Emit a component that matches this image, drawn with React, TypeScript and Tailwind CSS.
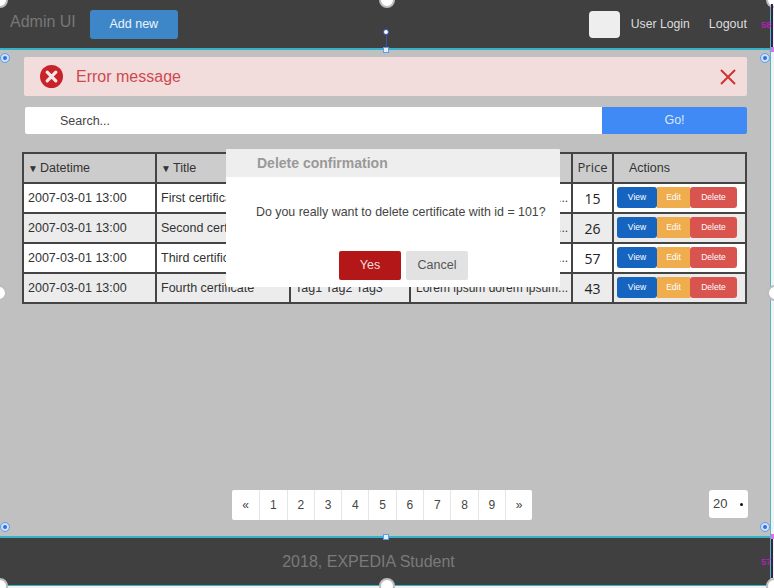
import React from "react";

const rows = [
  { title: "First certificate", price: "15" },
  { title: "Second certificate", price: "26" },
  { title: "Third certificate", price: "57" },
  { title: "Fourth certificate", price: "43" },
];
const pages = ["«", "1", "2", "3", "4", "5", "6", "7", "8", "9", "»"];

function Radio({ className }: { className: string }) {
  return (
    <span className={`absolute flex h-[10px] w-[10px] items-center justify-center rounded-full border border-[#5b9bf0] bg-[#cfe0f7] ${className}`}>
      <span className="h-[4px] w-[4px] rounded-full bg-[#2f73e0]" />
    </span>
  );
}

function Knob({ className }: { className: string }) {
  return <span className={`absolute h-[16px] w-[16px] rounded-full border-2 border-[#bdbdbd] bg-white ${className}`} />;
}

function Sort() {
  return <span className="mr-[4px] inline-block w-[8px] text-[10px] leading-none">▼</span>;
}

export default function App() {
  return (
    <div className="relative flex h-[588px] w-[774px] flex-col overflow-hidden bg-[#f2f2f2] font-['Liberation_Sans',Arial,sans-serif] text-[#333]">
      <div className="flex h-[586px] w-[771px] flex-col border-r border-[#4fb8c4]">
        <header className="flex h-[50px] shrink-0 items-center border-b-2 border-[#35b3c9] bg-[#404040] pl-[10px] pr-[23px]">
          <span className="-mt-[5px] text-[16px] text-[#777]">Admin UI</span>
          <button className="ml-[14px] h-[29px] w-[88px] rounded-[3px] bg-[#3d87c9] text-[12.5px] text-[#eef4fa]">Add new</button>
          <div className="ml-auto h-[27px] w-[31px] rounded-[4px] bg-[#eeeeee]" />
          <span className="ml-[11px] mt-[1px] text-[12.2px] text-[#dddddd]">User Login</span>
          <span className="ml-[19px] mt-[1px] text-[12.5px] text-[#dddddd]">Logout</span>
        </header>

        <main className="flex min-h-0 flex-1 flex-col bg-[#c0c0c0] pl-[22px] pr-[23px] pt-[7px]">
          <div className="ml-[2px] flex h-[39px] shrink-0 items-center rounded-[2px] bg-[#f3dcdc] pl-[16px] pr-[10px]">
            <svg width="23" height="23" viewBox="0 0 24 24">
              <circle cx="12" cy="12" r="12" fill="#c8232a" />
              <path d="M7.5 7.5 16.5 16.5M16.5 7.5 7.5 16.5" stroke="#f6e6e6" strokeWidth="3.4" strokeLinecap="round" />
            </svg>
            <span className="ml-[13px] text-[16px] text-[#cd4a4f]">Error message</span>
            <svg className="ml-auto" width="18" height="18" viewBox="0 0 18 18">
              <path d="M2 2 16 16M16 2 2 16" stroke="#cc3333" strokeWidth="2" />
            </svg>
          </div>

          <div className="ml-[3px] mt-[11px] flex h-[27px] shrink-0 overflow-hidden rounded-[2px]">
            <div className="flex flex-1 items-center bg-white pl-[35px] pt-[1px] text-[12.5px] text-[#444]">Search...</div>
            <button className="w-[145px] bg-[#3f8af5] text-[12.5px] text-[#dbe8fb]">Go!</button>
          </div>

          <table className="mt-[18px] w-[723px] shrink-0 table-fixed border-collapse border-2 border-[#444] text-[12.5px] text-[#333]">
            <colgroup>
              <col className="w-[133px]" />
              <col className="w-[134px]" />
              <col className="w-[120px]" />
              <col className="w-[162px]" />
              <col className="w-[41px]" />
              <col className="w-[133px]" />
            </colgroup>
            <thead>
              <tr className="h-[30px] bg-[#cccccc]">
                <th className="border-2 border-[#444] pl-[4px] text-left font-normal"><Sort />Datetime</th>
                <th className="border-2 border-[#444] pl-[4px] text-left font-normal"><Sort />Title</th>
                <th className="border-2 border-[#444] pl-[4px] text-left font-normal">Tags</th>
                <th className="border-2 border-[#444] pl-[4px] text-left font-normal">Description</th>
                <th className="border-2 border-[#444] text-center font-['Open_Sans',sans-serif] text-[13px] font-medium">Price</th>
                <th className="border-2 border-[#444] pl-[15px] text-left font-normal">Actions</th>
              </tr>
            </thead>
            <tbody>
              {rows.map((r, i) => (
                <tr key={r.price} className={`h-[30px] ${i % 2 === 0 ? "bg-white" : "bg-[#ececec]"}`}>
                  <td className="border-2 border-[#444] pl-[4px]">2007-03-01 13:00</td>
                  <td className="overflow-hidden whitespace-nowrap border-2 border-[#444] pl-[4px]">{r.title}</td>
                  <td className="overflow-hidden whitespace-nowrap border-2 border-[#444] pl-[4px]">Tag1 Tag2 Tag3</td>
                  <td className="overflow-hidden whitespace-nowrap border-2 border-[#444] pl-[5px] text-[12px]">Lorem ipsum dorem ipsum...</td>
                  <td className="border-2 border-[#444] text-center font-['Open_Sans',sans-serif] text-[14px] font-medium text-[#222]">{r.price}</td>
                  <td className="border-2 border-[#444] pl-[3px]">
                    <div className="-mt-[1px] flex h-[21px] w-[120px] text-[8.5px] text-white">
                      <span className="flex w-[40px] items-center justify-center rounded-[3px] bg-[#1565c0]">View</span>
                      <span className="flex w-[33px] items-center justify-center bg-[#f0ad4e]">Edit</span>
                      <span className="flex flex-1 items-center justify-center rounded-[3px] bg-[#d9534f]">Delete</span>
                    </div>
                  </td>
                </tr>
              ))}
            </tbody>
          </table>

          <div className="mt-auto mb-[16px] flex items-start">
            <nav className="ml-[210px] flex h-[30px] overflow-hidden rounded-[2px] bg-white">
              {pages.map((p, i) => (
                <span key={p} className={`flex w-[27.3px] items-center justify-center text-[12px] font-normal text-[#444] ${i > 0 ? "border-l border-[#e6e6e6]" : ""}`}>{p}</span>
              ))}
            </nav>
            <div className="ml-auto -mr-[1px] flex h-[28px] w-[39px] items-center justify-between rounded-[3px] bg-white pl-[4px] pr-[5px] text-[13px] text-[#444]">
              <span>20</span>
              <span className="h-[3px] w-[3px] rounded-full bg-[#111]" />
            </div>
          </div>
        </main>

        <footer className="flex h-[50px] shrink-0 items-center justify-center border-t-2 border-b border-[#35b3c9] bg-[#404040] pr-[33px] text-[16px] text-[#7a7a7a]">
          2018, EXPEDIA Student
        </footer>
      </div>

      <div role="dialog" className="absolute left-[226px] top-[149px] flex h-[138px] w-[334px] flex-col overflow-hidden rounded-[2px] bg-white">
        <div className="flex h-[28px] shrink-0 items-center bg-[#eeeeee] pl-[31px] text-[14px] font-bold text-[#999]">Delete confirmation</div>
        <p className="mt-[28px] whitespace-nowrap pl-[30px] text-[12.4px] leading-[14px] text-[#444]">Do you really want to delete certificate with id = 101?</p>
        <div className="ml-[113px] mt-[32px] flex gap-[5px]">
          <button className="h-[29px] w-[62px] rounded-[2px] bg-[#b31717] text-[12.5px] text-[#f3dede]">Yes</button>
          <button className="h-[29px] w-[62px] rounded-[2px] bg-[#e2e2e2] text-[12.5px] text-[#555]">Cancel</button>
        </div>
      </div>

      <Knob className="left-[379px] -top-[8px]" />
      <Knob className="-left-[8px] -top-[8px]" />
      <Knob className="-right-[8px] -top-[8px]" />
      <Knob className="-left-[9px] top-[285px]" />
      <Knob className="-right-[9px] top-[285px]" />
      <Knob className="left-[379px] top-[578px]" />
      <Knob className="-left-[8px] top-[578px]" />
      <Knob className="-right-[8px] top-[578px]" />

      <span className="absolute left-[386px] top-[33px] h-[16px] w-[1px] bg-[#3355aa]" />
      <span className="absolute left-[383px] top-[29px] h-[6px] w-[6px] rounded-full border border-[#3355cc] bg-white" />
      <span className="absolute left-[383px] top-[47px] h-[6px] w-[6px] border border-[#5b9bf0] bg-[#e8f0ff]" />
      <span className="absolute left-[383px] top-[534px] h-[6px] w-[6px] border border-[#5b9bf0] bg-[#e8f0ff]" />
      <Radio className="left-[0px] top-[53px]" />
      <Radio className="left-[0px] top-[522px]" />
      <Radio className="left-[760px] top-[53px]" />
      <Radio className="left-[760px] top-[522px]" />
      <span className="absolute left-[771px] top-[4px] h-[44px] w-[2px] bg-[#3a2148]" />
      <span className="absolute left-[771px] top-[537px] h-[41px] w-[2px] bg-[#3a2148]" />
      <span className="absolute left-[771px] top-[47px] h-[5px] w-[3px] bg-[#e070f0]" />
      <span className="absolute left-[771px] top-[534px] h-[5px] w-[3px] bg-[#e070f0]" />
      <span className="absolute left-[761px] top-[19px] text-[9px] font-bold text-[#b020b0]">58</span>
      <span className="absolute left-[761px] top-[556px] text-[9px] font-bold text-[#b020b0]">57</span>
    </div>
  );
}
